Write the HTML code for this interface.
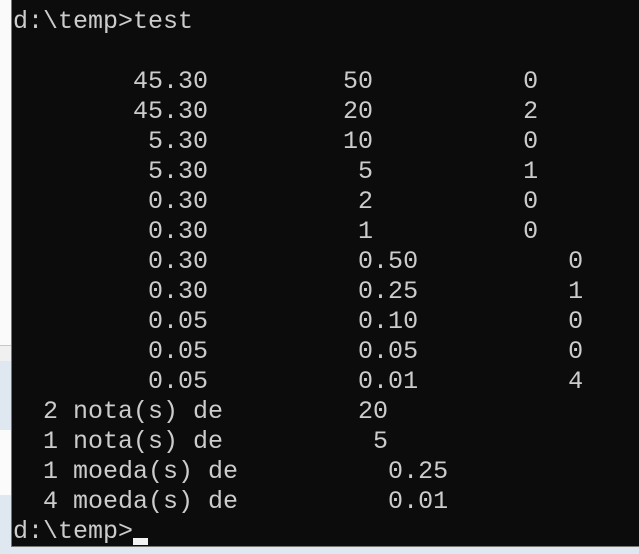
<!DOCTYPE html>
<html><head><style>
html,body{margin:0;padding:0;width:639px;height:554px;overflow:hidden;background:#dfe8f1;}
.l1{position:absolute;left:0;top:0;width:12px;height:345px;background:#fafafa;}
.l2{position:absolute;left:0;top:345px;width:12px;height:15px;background:#f0f0f0;border-top:1px solid #c8c8c8;}
.l3{position:absolute;left:0;top:430px;width:12px;height:65px;background:#fbfbfb;}
.term{position:absolute;left:11px;top:0;width:628px;height:546px;background:#0c0c0c;border-left:1px solid #777;border-bottom:1px solid #777;}
pre{margin:0;position:absolute;left:1px;top:7px;font-family:"Liberation Mono",monospace;font-size:25px;line-height:30px;color:#cccccc;}
.cur{position:absolute;left:121px;top:538px;width:15px;height:7px;background:#f2f2f2;}
</style></head><body>
<div class="l1"></div><div class="l2"></div><div class="l3"></div>
<div class="term">
<pre>d:\temp&gt;test

        45.30         50          0
        45.30         20          2
         5.30         10          0
         5.30          5          1
         0.30          2          0
         0.30          1          0
         0.30          0.50          0
         0.30          0.25          1
         0.05          0.10          0
         0.05          0.05          0
         0.05          0.01          4
  2 nota(s) de         20
  1 nota(s) de          5
  1 moeda(s) de          0.25
  4 moeda(s) de          0.01
d:\temp&gt;</pre>
<div class="cur"></div>
</div>
</body></html>
